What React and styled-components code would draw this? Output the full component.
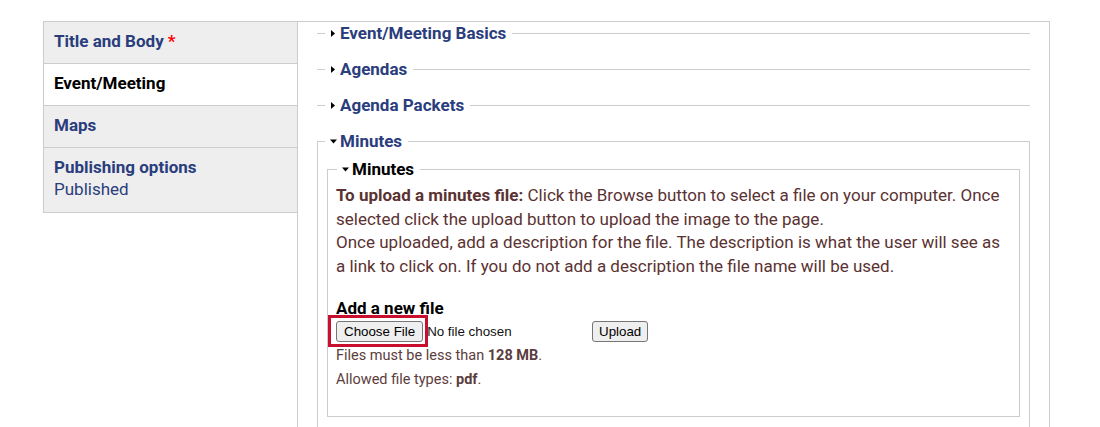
import React from 'react';
import styled, { createGlobalStyle } from 'styled-components';

const GlobalStyle = createGlobalStyle`
  html, body { margin: 0; padding: 0; background: #fff; }
  body { font-family: Roboto, "Liberation Sans", Arial, sans-serif; }
  * { box-sizing: border-box; }
`;

const Page = styled.div`
  padding: 21px 0 0 43px;
`;

const VerticalTabs = styled.div`
  display: flex;
  align-items: flex-start;
  width: 1007px;
`;

const TabList = styled.ul`
  list-style: none;
  margin: 0;
  padding: 0;
  width: 254px;
  flex: none;
  border-top: 1px solid #ccc;
`;

const TabItem = styled.li`
  background: ${p => (p.$selected ? '#fff' : '#eee')};
  border-left: 1px solid #ccc;
  border-bottom: 1px solid #ccc;
  padding: 8px 10px 11px;
  font-size: 17px;
  line-height: 22px;
`;

const TabTitle = styled.strong`
  display: block;
  font-weight: 700;
  color: ${p => (p.$selected ? '#000' : '#2a3d7c')};
`;

const Required = styled.span`
  color: #f00;
  margin-left: 4px;
`;

const TabSummary = styled.span`
  display: block;
  color: #2a3d7c;
  font-weight: 400;
  margin-bottom: 1px;
`;

const Pane = styled.div`
  flex: 1;
  min-width: 0;
  min-height: 430px;
  border: 1px solid #ccc;
  padding: 2px 19px 0;
`;

const Fieldset = styled.fieldset`
  min-width: 0;
  margin: ${p => p.$margin};
  border: 1px solid #ccc;
  border-width: ${p => (p.$collapsed ? '1px 0 0 0' : '1px')};
  padding: ${p => p.$padding};
`;

const Legend = styled.legend`
  margin-left: ${p => p.$offset}px;
  padding: 0 6px 0 0;
  font-size: 17px;
  line-height: 19px;
  font-weight: 700;
  color: ${p => (p.$dark ? '#000' : '#2a3d7c')};
`;

const LegendLink = styled.span`
  display: flex;
  align-items: flex-start;
  cursor: pointer;
`;

const Arrow = styled.svg`
  display: block;
  flex: none;
  width: 15px;
  height: 19px;
`;

const Description = styled.p`
  margin: 5px 0 0;
  font-size: 17px;
  line-height: 23.7px;
  color: #5b3232;

  strong { font-weight: 700; }
`;

const FormItem = styled.div`
  margin-top: 17px;
`;

const Label = styled.label`
  display: block;
  font-size: 17px;
  line-height: 24px;
  font-weight: 700;
  color: #000;
`;

const FileRow = styled.div`
  display: flex;
  align-items: center;
  height: 22px;
  margin-top: 1px;
`;

const FileInput = styled.div`
  display: flex;
  align-items: center;
  width: 256px;
  flex: none;
`;

const Highlight = styled.span`
  position: relative;
  display: inline-flex;

  &::after {
    content: '';
    position: absolute;
    top: -6px;
    left: -8px;
    right: -5px;
    bottom: -5px;
    border: 3px solid #c8102e;
    pointer-events: none;
  }
`;

const Button = styled.button`
  height: 21px;
  margin: 0;
  padding: 0 ${p => p.$pad}px;
  font-family: "Liberation Sans", Arial, sans-serif;
  font-size: 13.333px;
  color: #000;
  background: #efefef;
  border: 1px solid #767676;
  border-radius: 3px;
  line-height: 19px;
`;

const NoFile = styled.span`
  margin-left: 4px;
  font-family: "Liberation Sans", Arial, sans-serif;
  font-size: 13.333px;
  color: #111;
`;

const Hint = styled.div`
  margin-top: ${p => p.$top}px;
  font-size: 14.5px;
  line-height: 20px;
  color: #5b3d3d;

  strong { font-weight: 700; }
`;

const Collapsed = () => (
  <Arrow viewBox="0 0 15 19">
    <polygon points="6,6 10,9.5 6,13" fill="#000" />
  </Arrow>
);

const Expanded = () => (
  <Arrow viewBox="0 0 15 19">
    <polygon points="5,7.5 12,7.5 8.5,11.5" fill="#000" />
  </Arrow>
);

const CollapsedSection = ({ title }) => (
  <Fieldset $collapsed $margin="0 0 17px" $padding="0 0 0 8px">
    <Legend $offset={0}>
      <LegendLink>
        <Collapsed />
        {title}
      </LegendLink>
    </Legend>
  </Fieldset>
);

export default function App() {
  return (
    <>
      <GlobalStyle />
      <Page>
        <VerticalTabs>
          <TabList>
            <TabItem>
              <TabTitle>
                Title and Body<Required>*</Required>
              </TabTitle>
            </TabItem>
            <TabItem $selected>
              <TabTitle $selected>Event/Meeting</TabTitle>
            </TabItem>
            <TabItem>
              <TabTitle>Maps</TabTitle>
            </TabItem>
            <TabItem>
              <TabTitle>Publishing options</TabTitle>
              <TabSummary>Published</TabSummary>
            </TabItem>
          </TabList>
          <Pane>
            <CollapsedSection title="Event/Meeting Basics" />
            <CollapsedSection title="Agendas" />
            <CollapsedSection title="Agenda Packets" />
            <Fieldset $margin="0" $padding="0 9px 20px">
              <Legend $offset={-2}>
                <LegendLink>
                  <Expanded />
                  Minutes
                </LegendLink>
              </Legend>
              <Fieldset $margin="9px 0 0" $padding="0 8px 26px">
                <Legend $offset={1} $dark>
                  <LegendLink>
                    <Expanded />
                    Minutes
                  </LegendLink>
                </Legend>
                <Description>
                  <strong>To upload a minutes file:</strong> Click the Browse button to select a file on
                  your computer. Once selected click the upload button to upload the image to the page.
                  <br />
                  Once uploaded, add a description for the file. The description is what the user will
                  see as a link to click on. If you do not add a description the file name will be used.
                </Description>
                <FormItem>
                  <Label>Add a new file</Label>
                  <FileRow>
                    <FileInput>
                      <Highlight>
                        <Button type="button" $pad={7}>Choose File</Button>
                      </Highlight>
                      <NoFile>No file chosen</NoFile>
                    </FileInput>
                    <Button type="button" $pad={6}>Upload</Button>
                  </FileRow>
                  <Hint $top={3}>
                    Files must be less than <strong>128 MB</strong>.
                  </Hint>
                  <Hint $top={4}>
                    Allowed file types: <strong>pdf</strong>.
                  </Hint>
                </FormItem>
              </Fieldset>
            </Fieldset>
          </Pane>
        </VerticalTabs>
      </Page>
    </>
  );
}
